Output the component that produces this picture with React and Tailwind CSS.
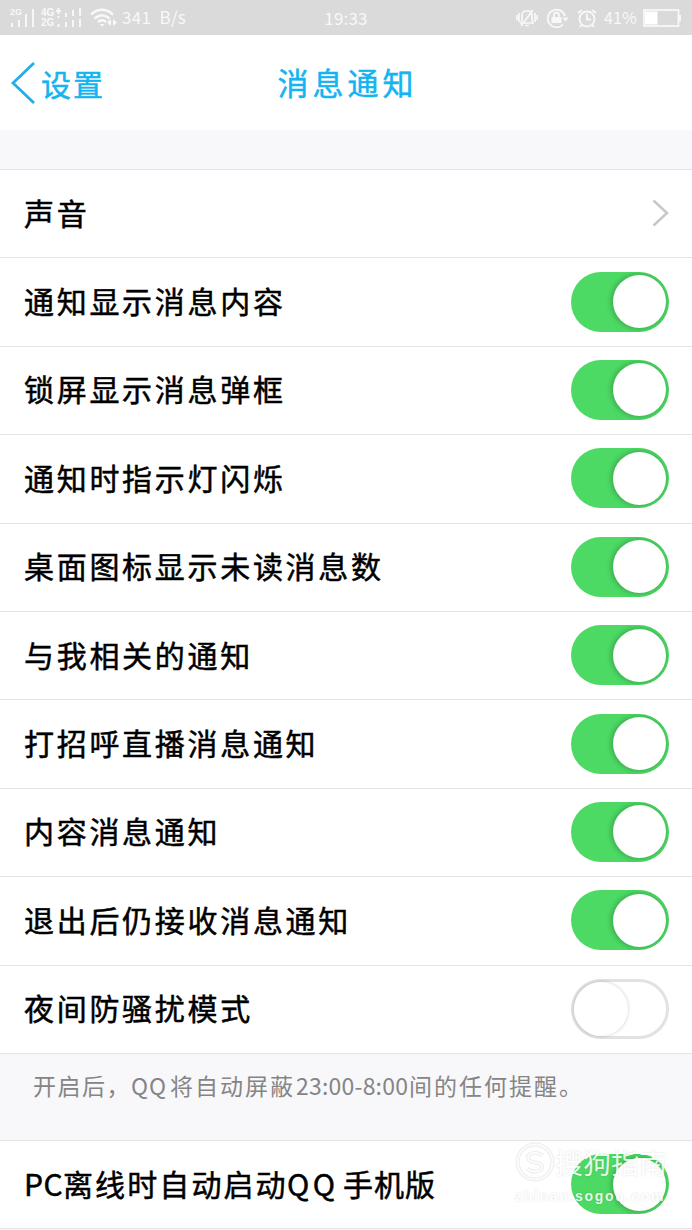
import React from 'react';

const ROWS = [
  { label: '通知显示消息内容', on: true },
  { label: '锁屏显示消息弹框', on: true },
  { label: '通知时指示灯闪烁', on: true },
  { label: '桌面图标显示未读消息数', on: true },
  { label: '与我相关的通知', on: true },
  { label: '打招呼直播消息通知', on: true },
  { label: '内容消息通知', on: true },
  { label: '退出后仍接收消息通知', on: true },
  { label: '夜间防骚扰模式', on: false },
];

function Toggle({ on }) {
  return on ? (
    <span className="flex h-[60px] w-[98px] shrink-0 items-center justify-end overflow-hidden rounded-full bg-[#4cd964] pr-[3.5px]">
      <span className="h-[53px] w-[53px] rounded-full bg-white shadow-[-1px_0px_5px_1px_rgba(0,0,0,0.22)]" />
    </span>
  ) : (
    <span className="flex h-[60px] w-[98px] shrink-0 items-center rounded-full border-[3px] border-[#e2e2e2] bg-white">
      <span className="h-[54px] w-[54px] rounded-full bg-white shadow-[0px_0px_3px_1px_rgba(0,0,0,0.12)]" />
    </span>
  );
}

function Row({ children, control }) {
  return (
    <div className="flex h-[88.4px] shrink-0 items-center justify-between border-b-[1.5px] border-[#e4e4e6] bg-white pl-[24px] pr-[23px] pb-[1px]">
      <span className="flex whitespace-nowrap pb-[3px] text-[30px] leading-none tracking-[2.7px] text-black [-webkit-text-stroke:0.5px_black]">
        {children}
      </span>
      {control}
    </div>
  );
}

function Bars({ heights }) {
  return (
    <span className="flex items-end gap-[5px]">
      {heights.map((h, i) => (
        <span key={i} className="w-[2px] bg-[#f7f7f7]" style={{ height: h }} />
      ))}
    </span>
  );
}

function StatusBar() {
  return (
    <div className="grid h-[35px] shrink-0 grid-cols-[1fr_auto_1fr] items-center bg-[#dadada] pl-[10px] pr-[10px] text-[17px] leading-none text-[#f8f8f8]">
      <div className="flex items-center">
        <div className="relative flex h-[19px] w-[26px] items-end pl-px">
          <Bars heights={[4, 7, 13, 18]} />
          <span className="absolute left-0 top-0 font-['Liberation_Sans'] text-[9px] font-bold leading-none">2G</span>
        </div>
        <div className="ml-[5px] flex h-[20px] w-[42px] items-end gap-[2px]">
          <span className="flex flex-col font-['Liberation_Sans'] text-[10px] font-bold leading-[10px]">
            <span className="flex h-[10px] items-center">4G</span>
            <span className="flex h-[10px] items-center">2G</span>
          </span>
          <svg width="26" height="20" viewBox="0 0 26 20" fill="none" stroke="#f7f7f7" strokeWidth="2">
            <path d="M0 3h5M2.500 0v6M2.500 8v2M2.500 16v3M10 5v4M10 14v5M17 2v6M17 12v7M24 0v8M24 11v8" />
          </svg>
        </div>
        <svg className="ml-[7px]" width="27" height="20" viewBox="0 0 27 20" fill="none" stroke="#f9f9f9" strokeWidth="2.4">
          <path d="M1 6.5Q12 -3 23 6.5M4.5 10.5Q12 4 19.5 10.5M8 14Q12 10.5 16 14" />
          <path d="M9.5 16L12 18.5L14.5 16Z" fill="#f9f9f9" strokeWidth="0" />
          <path d="M21 11v7l-4-3.500zM23 11v7l4-3.500z" fill="#f9f9f9" stroke="none" />
        </svg>
        <span className="ml-[5px] whitespace-nowrap pb-[2px] tracking-[0.3px]">341&nbsp; B/s</span>
      </div>
      <span className="pb-[1px] tracking-[0.2px]">19:33</span>
      <div className="flex items-center justify-end">
        <svg width="22" height="20" viewBox="0 0 22 20" fill="none" stroke="#f8f8f8" strokeWidth="1.7">
          <path d="M5 15h12l-1-3V7q0-4-5-4T6 7v5zM9 17.500h4M5 18L17 2M3 5v9M19 5v9M.9 7v5M21.100 7v5" />
        </svg>
        <svg className="ml-[8px]" width="24" height="20" viewBox="0 0 24 20" fill="none" stroke="#f8f8f8" strokeWidth="1.8">
          <path d="M17 16.500A8.800 8.800 0 1 1 19 8" />
          <path d="M5.500 9h10v6h-10z" fill="#f8f8f8" stroke="none" />
          <path d="M8 9V7q0-2.500 2.500-2.500T13 7v2" />
          <path d="M16.500 9.500h6l-3 4z" fill="#f8f8f8" stroke="none" />
        </svg>
        <svg className="ml-[7px]" width="20" height="20" viewBox="0 0 20 20" fill="none" stroke="#f8f8f8" strokeWidth="1.9">
          <circle cx="10" cy="11" r="7.500" />
          <path d="M10 6v5.500h4M1 5l4-3M19 5l-4-3M4.500 17L3 19M15.500 17L17 19" />
        </svg>
        <span className="ml-[7px] w-[34px] whitespace-nowrap pb-[2px] text-[16px] tracking-[0.1px]">41%</span>
        <svg className="ml-[5px]" width="39" height="18" viewBox="0 0 39 18" fill="none">
          <rect x="1" y="1" width="34.500" height="16" stroke="#f8f8f8" strokeWidth="1.700" />
          <path d="M2 2.500h12.500v13H2z" fill="#fff" />
          <path d="M36 6h2v6h-2z" fill="#f8f8f8" />
        </svg>
      </div>
    </div>
  );
}

function Watermark() {
  return (
    <div className="pointer-events-none absolute left-[515px] top-[1142px] flex w-[156px] flex-col text-white opacity-85 [text-shadow:0_0_2px_rgba(0,0,0,0.16)]">
      <div className="flex items-center">
        <svg width="40" height="40" viewBox="0 0 40 40" fill="none">
          <g stroke="#eaeaea" strokeWidth="4">
            <circle cx="20" cy="20" r="17.500" />
            <path d="M27.500 13.500Q25 11 20 11q-7 0-7 4.500t7 5 7 4.500-7 4.500q-5 0-8-3" />
          </g>
          <g stroke="#fcfcfc" strokeWidth="2">
            <circle cx="20" cy="20" r="17.500" />
            <path d="M27.500 13.500Q25 11 20 11q-7 0-7 4.500t7 5 7 4.500-7 4.500q-5 0-8-3" />
          </g>
        </svg>
        <span className="whitespace-nowrap text-[28px] leading-[38px]">搜狗指南</span>
      </div>
      <span className="mt-[4px] whitespace-nowrap font-['Liberation_Sans'] text-[14px] font-bold leading-[20px] tracking-[1.700px]">zhinan.sogou.com</span>
    </div>
  );
}

export default function App() {
  return (
    <div className="relative flex h-[1230px] w-[692px] flex-col overflow-hidden bg-[#f8f8fb] font-['Noto_Sans_CJK_SC',sans-serif]">
      <StatusBar />
      <header className="grid h-[95px] shrink-0 grid-cols-[1fr_auto_1fr] items-center bg-white pl-[11px] text-[#14b4f2]">
        <div className="flex items-center gap-[6px]">
          <svg width="24" height="42" viewBox="0 0 24 42" fill="none" stroke="#22aee8" strokeWidth="2.800">
            <path d="M23 1L2 21L23 41" />
          </svg>
          <span className="pt-px text-[30px] leading-none tracking-[2px] [-webkit-text-stroke:0.5px_#14b4f2]">设置</span>
        </div>
        <h1 className="mr-[8px] pb-[2px] text-[31px] font-normal leading-none tracking-[4px] [-webkit-text-stroke:0.5px_#14b4f2]">消息通知</h1>
        <span />
      </header>
      <div className="h-[40px] shrink-0 border-b-[1.5px] border-[#e4e4e6]" />
      <Row
        control={
          <svg width="17" height="28" viewBox="0 0 17 28" fill="none" stroke="#c7c7cc" strokeWidth="2.500">
            <path d="M1.500 1.500L15 14L1.500 26.500" />
          </svg>
        }
      >
        声音
      </Row>
      {ROWS.map((r) => (
        <Row key={r.label} control={<Toggle on={r.on} />}>
          {r.label}
        </Row>
      ))}
      <div className="flex h-[87px] shrink-0 items-start whitespace-nowrap border-b-[1.5px] border-[#e4e4e6] pl-[33px] pt-[20px] text-[23px] leading-none text-[#858585]">
        <span className="w-[98px] tracking-[1.500px]">开启后，</span>
        <span className="w-[39px] tracking-[1px]">QQ</span>
        <span className="w-[126px] tracking-[2px]">将自动屏蔽</span>
        <span className="w-[113px] tracking-[0.200px]">23:00-8:00</span>
        <span className="tracking-[2px]">间的任何提醒。</span>
      </div>
      <Row control={<Toggle on />}>
        <span className="w-[39px] tracking-[0.500px]">PC</span>
        <span className="w-[224px] tracking-[2.100px]">离线时自动启动</span>
        <span className="w-[56px] tracking-[3.500px]">QQ</span>
        <span className="tracking-[1px]">手机版</span>
      </Row>
      <Watermark />
    </div>
  );
}
